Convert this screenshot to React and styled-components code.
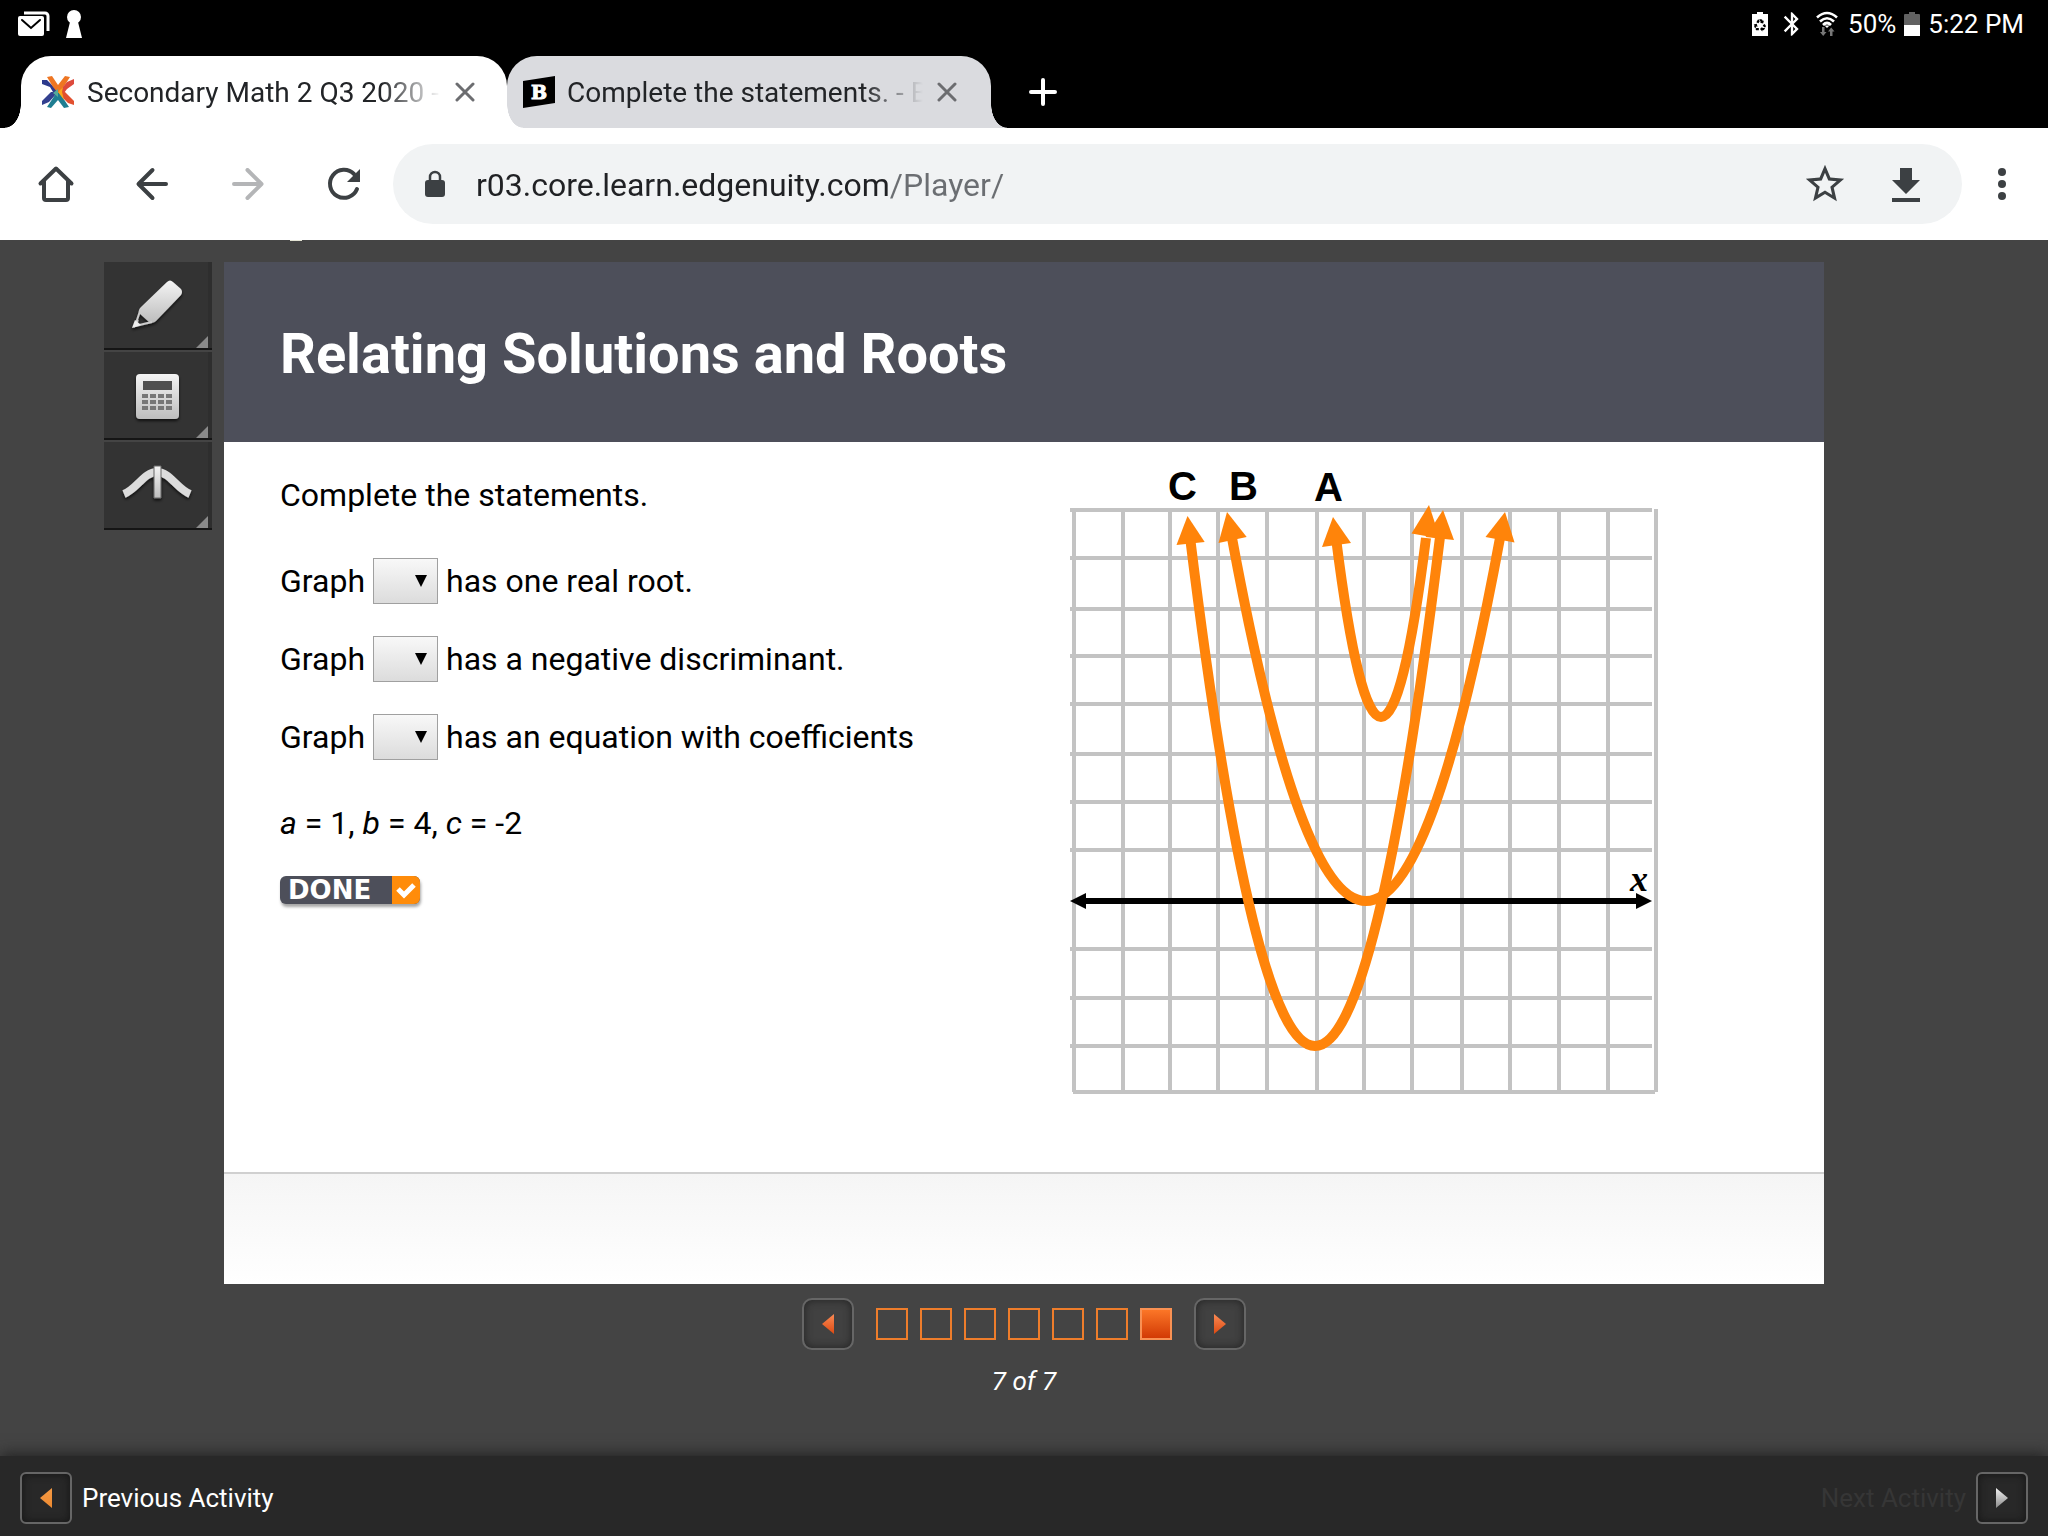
import React, { useState } from 'react';
import styled, { createGlobalStyle, css } from 'styled-components';
import { MdBluetooth, MdRecycling, MdStarBorder } from 'react-icons/md';

const GlobalStyle = createGlobalStyle`
	* {
		box-sizing: border-box;
	}
	body {
		margin: 0;
		background: #444;
		font-family: Roboto, 'Liberation Sans', sans-serif;
	}
	button {
		padding: 0;
		border: 0;
		background: none;
		color: inherit;
		font: inherit;
	}
	svg {
		display: block;
	}
`;

const Screen = styled.div`
	display: flex;
	flex-direction: column;
	min-height: 100vh;
`;

/* Status bar */

const StatusBar = styled.div`
	display: flex;
	justify-content: space-between;
	height: 56px;
	padding: 6px 24px 0 18px;
	background: #000;
	color: #fff;
	font-size: 26px;
	line-height: 36px;
`;

const StatusGroup = styled.div`
	display: flex;
	align-items: center;
	height: 36px;
	gap: ${props => props.gap}px;
`;

const BatterySaver = styled.span`
	position: relative;
	width: 16px;
	height: 24px;
	margin-right: 2px;
	svg:last-child {
		position: absolute;
		left: 1px;
		top: 6px;
	}
`;

/* Tabs */

const TabStrip = styled.div`
	display: flex;
	height: 72px;
	padding-left: 21px;
	background: #000;
`;

const Tab = styled.div`
	position: relative;
	z-index: ${props => (props.active ? 1 : 0)};
	display: flex;
	align-items: center;
	width: 486px;
	height: 72px;
	padding: 0 32px 0 ${props => (props.active ? 20 : 16)}px;
	border-radius: 30px 30px 0 0;
	background: ${props => (props.active ? '#fff' : '#dadbdf')};
	color: #222427;
	font-size: 28px;
	line-height: 36px;
	&:before,
	&:after {
		content: '';
		position: absolute;
		bottom: 0;
		width: 16px;
		height: 24px;
	}
	&:before {
		right: 100%;
		background: radial-gradient(ellipse 16px 24px at 0 0, transparent 97%, ${props => (props.active ? '#fff' : '#dadbdf')});
	}
	&:after {
		left: 100%;
		background: radial-gradient(ellipse 16px 24px at 100% 0, transparent 97%, ${props => (props.active ? '#fff' : '#dadbdf')});
	}
	${props => !props.active && css`
		width: 484px;
		padding-right: 34px;
	`}
`;

const TabTitle = styled.span`
	flex: 1;
	min-width: 0;
	margin: 0 10px 0 12px;
	padding-top: 2px;
	white-space: nowrap;
	mask-image: linear-gradient(to right, #000 calc(100% - 64px), transparent calc(100% - 4px));
`;

const NewTab = styled.button`
	display: flex;
	align-items: center;
	margin-left: 38px;
`;

/* Toolbar */

const Toolbar = styled.div`
	display: flex;
	align-items: center;
	height: 112px;
	padding: 0 22px 0 32px;
	background: #fff;
	color: #3c4043;
`;

const NavButtons = styled.div`
	display: flex;
	gap: 48px;
	margin-right: 25px;
`;

const ToolbarButton = styled.button`
	width: 48px;
	height: 48px;
	opacity: ${props => (props.disabled ? 0.38 : 1)};
`;

const Omnibox = styled.div`
	display: flex;
	flex: 1;
	align-items: center;
	height: 80px;
	margin-right: 16px;
	padding: 0 32px;
	border-radius: 40px;
	background: #f1f3f4;
`;

// the host part is drawn darker than the path
const Address = styled.input`
	flex: 1;
	min-width: 0;
	height: 48px;
	margin-left: 31px;
	padding: 2px 0 0;
	border: 0;
	outline: 0;
	background: linear-gradient(to right, #202124 412px, #6b6e72 412px);
	background-clip: text;
	-webkit-text-fill-color: transparent;
	font-family: Roboto, sans-serif;
	font-size: 32px;
`;

const OmniboxButtons = styled.div`
	display: flex;
	gap: 32px;
`;

/* Player */

const Player = styled.main`
	position: relative;
	display: grid;
	flex: 1;
	grid-template-columns: 1fr minmax(0, 1600px) 1fr;
	align-content: start;
	padding-top: 22px;
	background: #444;
`;

const LogoEdge = styled.span`
	position: absolute;
	left: 290px;
	top: 0;
	width: 12px;
	height: 1px;
	background: #e4e4d4;
`;

const Tools = styled.div`
	display: flex;
	flex-direction: column;
	justify-self: end;
	gap: 2px;
	margin-right: 12px;
`;

const Tool = styled.button`
	width: 108px;
	height: 88px;
	border-bottom: 2px solid #151515;
	background: linear-gradient(to right, #333 104px, #2e2e2e 104px);
`;

const Frame = styled.section`
	grid-column: 2;
	background: #fff;
`;

const FrameHeader = styled.header`
	display: flex;
	align-items: center;
	height: 180px;
	padding: 4px 56px 0;
	background: #4d4f5a;
	color: #fff;
	h1 {
		margin: 0;
		font-size: 56px;
		font-weight: 700;
		line-height: 66px;
	}
`;

const Activity = styled.div`
	display: flex;
	justify-content: space-between;
	padding: 8px 134px 62px 56px;
`;

const Statements = styled.div`
	padding-top: 25px;
	color: #000;
	font-size: 32px;
	line-height: 40px;
	p {
		margin: 0;
	}
`;

const Blanks = styled.div`
	display: flex;
	flex-direction: column;
	gap: 32px;
	margin: 43px 0;
`;

const Blank = styled.label`
	display: flex;
	align-items: center;
	gap: 8px;
	height: 46px;
`;

const SelectBox = styled.span`
	position: relative;
	width: 65px;
	height: 46px;
	svg {
		position: absolute;
		right: 11px;
		top: 17px;
		pointer-events: none;
	}
`;

const Select = styled.select`
	appearance: none;
	width: 100%;
	height: 100%;
	padding: 0 12px;
	border: 1px solid #a0a0a0;
	border-radius: 0;
	background: linear-gradient(#f8f8f8, #dcdcdc);
	font: inherit;
`;

const DoneButton = styled.button`
	display: flex;
	width: 140px;
	height: 28px;
	margin-top: 33px;
	overflow: hidden;
	border-radius: 6px;
	background: #4d4f5a;
	box-shadow: 1px 3px 3px rgba(0, 0, 0, 0.35);
	color: #fff;
	font-family: 'DejaVu Sans', sans-serif;
	font-size: 26px;
	font-weight: 700;
	line-height: 28px;
	text-align: left;
	span {
		flex: 1;
		padding-left: 8px;
	}
`;

const Plot = styled.svg`
	flex: none;
	width: 640px;
	height: 660px;
`;

const FrameFooter = styled.div`
	height: 112px;
	border-top: 2px solid #d0d0d0;
	background: linear-gradient(#f5f5f5, #fff);
`;

/* Frame navigation */

const Pager = styled.nav`
	display: flex;
	grid-column: 2;
	align-items: center;
	justify-content: center;
	gap: 22px;
	padding-top: 14px;
`;

const ArrowButton = styled.button`
	display: flex;
	align-items: center;
	justify-content: center;
	width: 52px;
	height: 52px;
	border: 2px solid #666;
	border-radius: ${props => (props.square ? 6 : 10)}px;
	background: ${props => (props.square ? '#282828' : '#414141')};
	box-shadow: inset 0 0 8px ${props => (props.square ? '#151515' : '#222')};
`;

const Steps = styled.div`
	display: flex;
	gap: 12px;
`;

const Step = styled.button`
	width: 32px;
	height: 32px;
	border: 2px solid #ee7d2b;
	${props => props.current && css`
		border-color: #f99153;
		background: linear-gradient(#fb7627, #d23a05);
	`}
`;

const Counter = styled.p`
	grid-column: 2;
	margin: 14px 0 0;
	color: #fff;
	font-size: 26px;
	font-style: italic;
	line-height: 34px;
	text-align: center;
`;

const BottomBar = styled.footer`
	position: relative;
	display: flex;
	align-items: center;
	justify-content: space-between;
	height: 80px;
	padding: 4px 20px 0;
	background: #282828;
	box-shadow: 0 -2px 14px #222;
`;

const ActivityLink = styled.label`
	display: flex;
	align-items: center;
	gap: 10px;
	color: ${props => (props.dim ? '#363636' : '#fff')};
	font-size: 26px;
	line-height: 34px;
`;

const stroke = { fill: 'none', stroke: 'currentColor', strokeWidth: 4, strokeLinecap: 'round', strokeLinejoin: 'round' };

const Cross = () => (
	<svg width='20' height='20' viewBox='0 0 20 20' stroke='#6c6d70' strokeWidth='3' strokeLinecap='round'>
		<path d='M2 2 18 18M18 2 2 18' />
	</svg>
);

const MailIcon = () => (
	<svg width='32' height='28' viewBox='0 0 32 28'>
		<path d='M6 3H27a3 3 0 0 1 3 3V21' fill='none' stroke='#fff' strokeWidth='3' />
		<rect x='0' y='6' width='26' height='20' rx='2' fill='#fff' />
		<path d='M4 10 13 18 22 10' fill='none' stroke='#000' strokeWidth='2' strokeLinecap='round' />
	</svg>
);

const KeyholeIcon = () => (
	<svg width='16' height='28' viewBox='0 0 16 28' fill='#fff'>
		<circle cx='8' cy='7' r='7' />
		<path d='M4 12H12L16 28H0Z' />
	</svg>
);

const BatteryShape = ({ level }) => (
	<svg width='16' height='24' viewBox='0 0 16 24'>
		<path d='M5 0H11V2H15a1 1 0 0 1 1 1V24H0V3a1 1 0 0 1 1-1H5Z' fill={level < 1 ? '#626262' : '#fff'} />
		<rect y={24 - 22 * level} width='16' height={22 * level} fill='#fff' />
	</svg>
);

const WifiIcon = () => (
	<svg width='26' height='26' viewBox='-2 0 26 26'>
		<g fill='none' stroke='#fff' strokeWidth='2.6'>
			<path d='M1 6.500Q11-2.500 21 6.500' />
			<path d='M4 10.500Q11 4 18 10.500' />
			<path d='M7 14Q11 10 15 14' />
		</g>
		<path d='M8.500 14.500H13.500L11 17Z' fill='#fff' />
		<path d='M6 16H8.500V21H10.500L7.200 25 4 21H6ZM14 25H16.500V20.500H18.500L15.200 16.500 12 20.500H14Z' fill='#777' />
	</svg>
);

const EdgenuityIcon = () => (
	<svg width='34' height='34' viewBox='0 0 34 34' fill='none'>
		<path d='M1 5 6 5 16 15 17 17 12 17 9 12 1 9Z' fill='#2d3a8c' />
		<path d='M1 30V26L10 17H17L8 27Z' fill='#33408f' />
		<path d='M6 2 11 1 17 10 24 1 29 2 20 16 17 18 12 12Z' fill='#ee7623' />
		<path d='M33 4V9L26 14 23 18 18 17 26 7Z' fill='#dd4a3c' />
		<path d='M17 16 23 16 33 26V30L27 28 18 19Z' fill='#e2502f' />
		<path d='M6 32 14 20 17 17 20 20 28 32 23 33 17 25 10 33Z' fill='#1e7d91' />
		<path d='M12 18 17 14V22Z' fill='#55aa9a' />
		<path d='M17 17 22 12 21 17 23 25Z' fill='#fba61a' />
	</svg>
);

const BrainlyIcon = () => (
	<svg width='32' height='32' viewBox='0 0 32 32'>
		<path d='M0 5 32 0V27L0 32Z' fill='#000' />
		<text x='16' y='23' fill='#fff' stroke='#fff' fontFamily='DejaVu Serif' fontSize='19' fontWeight='700' textAnchor='middle'>B</text>
	</svg>
);

const HomeIcon = () => (
	<svg width='48' height='48' viewBox='0 0 48 48' {...stroke}>
		<path d='M8.500 23.500 24 8.500 39.500 23.500M12 21V38a2 2 0 0 0 2 2H34a2 2 0 0 0 2-2V21' />
	</svg>
);

const BackIcon = () => (
	<svg width='48' height='48' viewBox='0 0 48 48' {...stroke}>
		<path d='M38 24H11M24.500 10 10.500 24 24.500 38' />
	</svg>
);

const ForwardIcon = () => (
	<svg width='48' height='48' viewBox='0 0 48 48' {...stroke}>
		<path d='M10 24H37M23.500 10 37.500 24 23.500 38' />
	</svg>
);

const ReloadIcon = () => (
	<svg width='48' height='48' viewBox='0 0 48 48' {...stroke}>
		<path d='M37 29A14 14 0 1 1 34 14' />
		<path d='M40 9V22H27Z' fill='currentColor' stroke='none' />
	</svg>
);

const LockIcon = () => (
	<svg width='20' height='28' viewBox='0 0 20 28'>
		<rect y='10' width='20' height='17' rx='3' fill='currentColor' />
		<path d='M5 11V7a5 5 0 0 1 10 0V11' fill='none' stroke='currentColor' strokeWidth='2.500' />
	</svg>
);

const DownloadIcon = () => (
	<svg width='48' height='48' viewBox='0 0 48 48' fill='currentColor'>
		<path d='M18 8H30V20H38L24 34 10 20H18ZM10 38H38V42H10Z' />
	</svg>
);

const MenuIcon = () => (
	<svg width='48' height='48' viewBox='0 0 48 48' fill='currentColor'>
		<circle cx='24' cy='12' r='4' />
		<circle cx='24' cy='24' r='4' />
		<circle cx='24' cy='36' r='4' />
	</svg>
);

const ToolDrawing = ({ children }) => (
	<svg width='108' height='86' viewBox='0 0 108 86'>
		<defs>
			<linearGradient id='metal' x1='0' y1='0' x2='0' y2='1'>
				<stop offset='0' stopColor='#f4f4f4' />
				<stop offset='1' stopColor='#bdbdbd' />
			</linearGradient>
			<filter id='drop' x='-20%' y='-20%' width='140%' height='150%'>
				<feDropShadow dx='0' dy='2' stdDeviation='1.500' floodColor='#000' floodOpacity='0.7' />
			</filter>
		</defs>
		<g filter='url(#drop)'>{children}</g>
		<path d='M104 74V86H92Z' fill='#8a8a8a' />
	</svg>
);

const HighlighterTool = () => (
	<ToolDrawing>
		<path d='M63 20Q66 17 69 20L77 27Q79 30 77 33L52 59Q49 62 45 60L35 51Q34 48 37 45Z' fill='url(#metal)' />
		<path d='M36 49 31 64 48 60M30 65 34 58' fill='none' stroke='#ccc' strokeWidth='2' />
		<path d='M28 66 31 58 37 63Z' fill='#eee' />
	</ToolDrawing>
);

const CalculatorTool = () => (
	<ToolDrawing>
		<rect x='32' y='22' width='43' height='45' rx='4' fill='url(#metal)' />
		<rect x='39' y='29' width='29' height='9' fill='#505050' />
		{[42, 48, 54].map(y => [38, 46, 54, 62].map(x => (
			<rect key={`${x}-${y}`} x={x} y={y} width='6' height='4' fill='#777' />
		)))}
	</ToolDrawing>
);

const GraphTool = () => (
	<ToolDrawing>
		<path d='M20 52C34 46 40 30 53 30S72 46 86 52' fill='none' stroke='#dcdcdc' strokeWidth='8' />
		<path d='M50 24H57V56H50Z' fill='url(#metal)' stroke='#666' strokeWidth='1' />
	</ToolDrawing>
);

const Arrow = ({ left, from, to }) => (
	<svg width='14' height='20' viewBox='0 0 14 20'>
		<defs>
			<linearGradient id={`arrow${from.slice(1)}`} x1='0' y1='0' x2='0' y2='1'>
				<stop offset='0' stopColor={from} />
				<stop offset='1' stopColor={to} />
			</linearGradient>
		</defs>
		<path d={left ? 'M13 0V20L1 10Z' : 'M1 0V20L13 10Z'} fill={`url(#arrow${from.slice(1)})`} />
	</svg>
);

const columns = [24, 73, 120, 168, 217, 267, 314, 362, 412, 460, 509, 558, 606];
const rows = [60, 108, 159, 206, 254, 304, 352, 400, 499, 548, 596];
const arrowHeads = [
	'137.500 66 126.500 95 154.700 92',
	'177 62 168.500 93 196.700 87',
	'283 67 272 97 301 93',
	'379 55 361.500 83.500 390 88.500',
	'393 60 375.500 87 404 90',
	'455 62 435.500 87 464.500 92.500',
];

const ParabolaPlot = () => (
	<Plot viewBox='0 0 640 660'>
		<g stroke='#c3c3c3' strokeWidth='4'>
			{columns.map(x => <line key={x} x1={x} x2={x} y1='59' y2='642' />)}
			{rows.map(y => <line key={y} x1='20' x2='602' y1={y} y2={y} />)}
			<line x1='23' x2='605' y1='642' y2='642' />
		</g>
		<line x1='32' x2='590' y1='451' y2='451' stroke='#000' strokeWidth='6' />
		<path d='M20 451 36 443V459ZM602 451 586 443V459Z' />
		<g fill='none' stroke='#ff840a' strokeWidth='10'>
			<path d='M140 87Q265 1105 390 87' />
			<path d='M182 88Q316 814 450 88' />
			<path d='M286 88Q331 446 376 88' />
		</g>
		<g fill='#ff840a'>
			{arrowHeads.map(points => <polygon key={points} points={points} />)}
		</g>
		<g fontFamily='Liberation Sans, sans-serif' fontSize='40' fontWeight='700'>
			<text x='118' y='50'>C</text>
			<text x='179' y='50'>B</text>
			<text x='264' y='51'>A</text>
		</g>
		<text x='580' y='441' fontFamily='Liberation Serif, serif' fontSize='36' fontStyle='italic' fontWeight='700'>x</text>
	</Plot>
);

const statements = [
	'has one real root.',
	'has a negative discriminant.',
	'has an equation with coefficients',
];

const GraphBlank = ({ text }) => {
	const [value, setValue] = useState('');
	return (
		<Blank>
			Graph
			<SelectBox>
				<Select value={value} onChange={e => setValue(e.target.value)}>
					<option value=''></option>
					<option>A</option>
					<option>B</option>
					<option>C</option>
				</Select>
				<svg width='12' height='12' viewBox='0 0 12 12'><path d='M0 0H12L6 12Z' /></svg>
			</SelectBox>
			{text}
		</Blank>
	);
};

const App = () => (
	<Screen>
		<GlobalStyle />
		<StatusBar>
			<StatusGroup gap={16}>
				<MailIcon />
				<KeyholeIcon />
			</StatusGroup>
			<StatusGroup gap={8}>
				<BatterySaver>
					<BatteryShape level={1} />
					<MdRecycling size={14} color='#000' />
				</BatterySaver>
				<MdBluetooth size={28} />
				<WifiIcon />
				<span>50%</span>
				<BatteryShape level={0.5} />
				<span>5:22 PM</span>
			</StatusGroup>
		</StatusBar>
		<TabStrip>
			<Tab active>
				<EdgenuityIcon />
				<TabTitle>Secondary Math 2 Q3 2020 -</TabTitle>
				<button aria-label='Close tab'><Cross /></button>
			</Tab>
			<Tab>
				<BrainlyIcon />
				<TabTitle>Complete the statements. - B</TabTitle>
				<button aria-label='Close tab'><Cross /></button>
			</Tab>
			<NewTab aria-label='New tab'>
				<svg width='28' height='28' viewBox='0 0 28 28' stroke='#fff' strokeWidth='4' strokeLinecap='round'>
					<path d='M14 2V26M2 14H26' />
				</svg>
			</NewTab>
		</TabStrip>
		<Toolbar>
			<NavButtons>
				<ToolbarButton aria-label='Home'><HomeIcon /></ToolbarButton>
				<ToolbarButton aria-label='Back'><BackIcon /></ToolbarButton>
				<ToolbarButton aria-label='Forward' disabled><ForwardIcon /></ToolbarButton>
				<ToolbarButton aria-label='Reload'><ReloadIcon /></ToolbarButton>
			</NavButtons>
			<Omnibox>
				<LockIcon />
				<Address aria-label='Address' defaultValue='r03.core.learn.edgenuity.com/Player/' />
				<OmniboxButtons>
					<ToolbarButton aria-label='Bookmark'><MdStarBorder size={46} /></ToolbarButton>
					<ToolbarButton aria-label='Download'><DownloadIcon /></ToolbarButton>
				</OmniboxButtons>
			</Omnibox>
			<ToolbarButton aria-label='Menu'><MenuIcon /></ToolbarButton>
		</Toolbar>
		<Player>
			<LogoEdge />
			<Tools>
				<Tool aria-label='Highlighter'><HighlighterTool /></Tool>
				<Tool aria-label='Calculator'><CalculatorTool /></Tool>
				<Tool aria-label='Graphing'><GraphTool /></Tool>
			</Tools>
			<Frame>
				<FrameHeader><h1>Relating Solutions and Roots</h1></FrameHeader>
				<Activity>
					<Statements>
						<p>Complete the statements.</p>
						<Blanks>
							{statements.map(text => <GraphBlank key={text} text={text} />)}
						</Blanks>
						<p><i>a</i> = 1, <i>b</i> = 4, <i>c</i> = -2</p>
						<DoneButton>
							<span>DONE</span>
							<svg width='28' height='28' viewBox='0 0 28 28'>
								<rect width='28' height='28' fill='#ff8c0a' />
								<path d='M6 13 12 19 22 9' fill='none' stroke='#fff' strokeWidth='5' />
							</svg>
						</DoneButton>
					</Statements>
					<ParabolaPlot />
				</Activity>
				<FrameFooter />
			</Frame>
			<Pager>
				<ArrowButton aria-label='Previous frame'><Arrow left from='#fb8a55' to='#dc4a12' /></ArrowButton>
				<Steps>
					{[1, 2, 3, 4, 5, 6, 7].map(n => <Step key={n} aria-label={`Frame ${n}`} current={n === 7 ? 1 : 0} />)}
				</Steps>
				<ArrowButton aria-label='Next frame'><Arrow from='#fb8a54' to='#dc4a12' /></ArrowButton>
			</Pager>
			<Counter>7 of 7</Counter>
		</Player>
		<BottomBar>
			<ActivityLink>
				<ArrowButton square><Arrow left from='#f49a45' to='#ee8a30' /></ArrowButton>
				Previous Activity
			</ActivityLink>
			<ActivityLink dim>
				Next Activity
				<ArrowButton square><Arrow from='#f2f2f2' to='#8a8a8a' /></ArrowButton>
			</ActivityLink>
		</BottomBar>
	</Screen>
);

export default App;
